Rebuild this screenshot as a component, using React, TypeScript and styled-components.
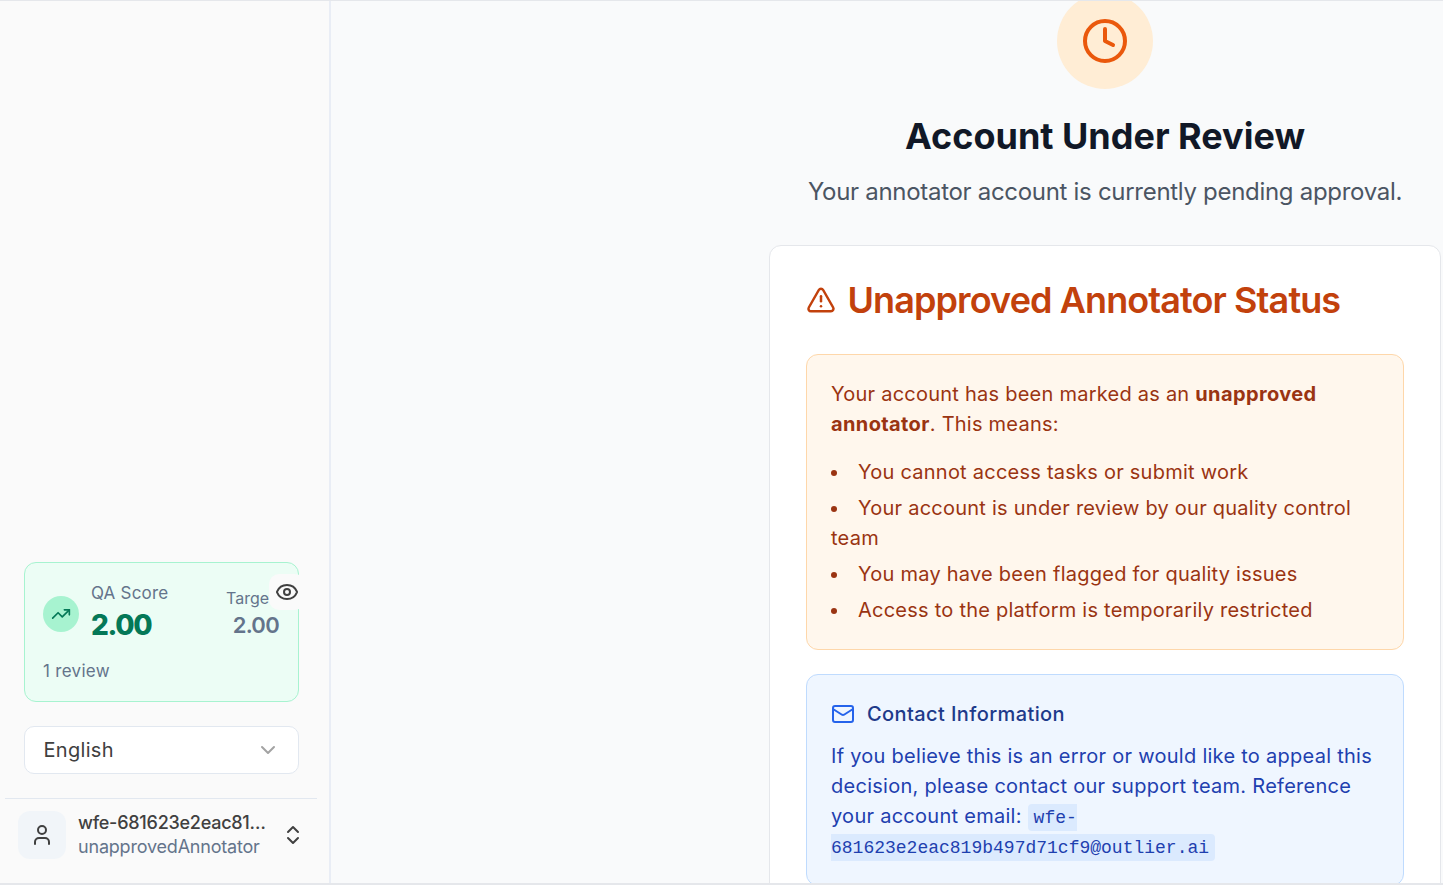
import React from 'react';
import styled, { createGlobalStyle } from 'styled-components';
import { ChevronDown, ChevronsUpDown, Clock, Eye, Mail, TrendingUp, TriangleAlert, User } from 'lucide-react';

const GlobalStyle = createGlobalStyle`
  * {
    box-sizing: border-box;
  }
  html,
  body {
    margin: 0;
    height: 885px;
    overflow: hidden;
    background: #f9fafb;
    font-family: Inter, 'Liberation Sans', sans-serif;
  }
`;

const Shell = styled.div`
  display: flex;
  height: 885px;
  border-top: 1px solid #e5e7eb;
  border-bottom: 2px solid #e5e7eb;
  overflow: hidden;
`;

const Sidebar = styled.aside`
  width: 331px;
  flex: none;
  display: flex;
  flex-direction: column;
  justify-content: flex-end;
  background: #fafafa;
  border-right: 2px solid #e9edf5;
  padding: 0 12px 0 5px;
`;

const ScoreCard = styled.section`
  position: relative;
  height: 140px;
  margin: 0 18px 24px 19px;
  padding: 18px 18px 0;
  background: #ecfdf5;
  border: 1px solid #a7f3d0;
  border-radius: 12px;
`;

const ScoreRow = styled.div`
  display: flex;
  align-items: center;
  gap: 12px;
`;

const ScoreBadge = styled.div`
  width: 36px;
  height: 36px;
  flex: none;
  margin-top: 2px;
  display: flex;
  align-items: center;
  justify-content: center;
  border-radius: 50%;
  background: #a7f3d0;
  color: #047857;
`;

const ScoreColumn = styled.div`
  flex: 1;
`;

const ScoreLabel = styled.div`
  font-size: 17px;
  line-height: 24px;
  letter-spacing: 0.2px;
  color: #64748b;
`;

const ScoreValue = styled.div`
  padding-top: 1px;
  font-size: 28px;
  line-height: 39px;
  font-weight: 800;
  letter-spacing: -1.3px;
  color: #047857;
`;

const TargetColumn = styled.div`
  width: 54px;
  margin-left: -1px;
  overflow: hidden;
  text-align: right;
`;

const TargetLabel = styled.div`
  font-size: 16px;
  line-height: 24px;
  color: #64748b;
  white-space: nowrap;
  text-align: left;
`;

const TargetValue = styled.div`
  padding-right: 1px;
  font-size: 22px;
  line-height: 30px;
  font-weight: 600;
  letter-spacing: -0.7px;
  color: #64748b;
`;

const ReviewCount = styled.div`
  margin-top: 14px;
  font-size: 17px;
  line-height: 24px;
  letter-spacing: 0.3px;
  color: #64748b;
`;

const EyeButton = styled.button`
  position: absolute;
  top: 11px;
  right: -7px;
  width: 36px;
  height: 36px;
  display: flex;
  align-items: center;
  justify-content: center;
  padding: 0;
  border: none;
  border-radius: 10px;
  background: #fafafa;
  color: #404040;
`;

const LanguageSelect = styled.div`
  height: 48px;
  margin: 0 18px 24px 19px;
  padding: 0 18px 0 18.5px;
  display: flex;
  align-items: center;
  justify-content: space-between;
  background: #fff;
  border: 1px solid #e2e8f0;
  border-radius: 10px;
  font-size: 20px;
  letter-spacing: 0.3px;
  color: #404040;
  svg {
    color: #a3a3a3;
  }
`;

const UserRow = styled.div`
  height: 85px;
  display: flex;
  align-items: flex-start;
  padding: 12px 13px 0;
  border-top: 1px solid #e2e8f0;
`;

const Avatar = styled.div`
  width: 48px;
  height: 48px;
  flex: none;
  display: flex;
  align-items: center;
  justify-content: center;
  border-radius: 12px;
  background: #f1f5f9;
  color: #404040;
`;

const UserText = styled.div`
  width: 188px;
  margin-left: 12px;
  flex: none;
`;

const UserName = styled.div`
  width: 188px;
  font-size: 18px;
  line-height: 24px;
  font-weight: 500;
  letter-spacing: -0.25px;
  color: #404040;
  white-space: nowrap;
  overflow: hidden;
  text-overflow: ellipsis;
`;

const UserRole = styled.div`
  font-size: 18px;
  line-height: 24px;
  letter-spacing: -0.2px;
  color: #64748b;
`;

const SwitchIcon = styled.div`
  margin: 12px 0 0 15px;
  display: flex;
  color: #404040;
`;

const Main = styled.main`
  flex: 1;
  display: flex;
  justify-content: flex-end;
  padding-right: 2px;
  background: #f9fafb;
`;

const Column = styled.div`
  width: 672px;
  margin-top: -8px;
  display: flex;
  flex-direction: column;
  align-items: center;
`;

const ClockCircle = styled.div`
  width: 96px;
  height: 96px;
  flex: none;
  display: flex;
  align-items: center;
  justify-content: center;
  border-radius: 50%;
  background: #ffedd5;
  color: #ea580c;
`;

const Title = styled.h1`
  margin: 23px 0 0;
  font-size: 36px;
  line-height: 48px;
  font-weight: 700;
  color: #111827;
`;

const Subtitle = styled.p`
  margin: 16px 0 0;
  font-size: 24px;
  line-height: 32px;
  letter-spacing: -0.3px;
  color: #4b5563;
  white-space: nowrap;
`;

const Card = styled.section`
  width: 100%;
  margin-top: 37px;
  padding: 30px 36px 0;
  background: #fff;
  border: 1px solid #e5e7eb;
  border-radius: 12px 12px 0 0;
  flex: 1;
`;

const CardHeading = styled.h2`
  margin: 0 0 30px;
  display: flex;
  align-items: center;
  gap: 11.5px;
  font-size: 36px;
  line-height: 48px;
  font-weight: 600;
  letter-spacing: -0.9px;
  color: #c2410c;
`;

const WarningBox = styled.div`
  height: 296px;
  padding: 24px;
  background: #fff7ed;
  border: 1px solid #fed7aa;
  border-radius: 12px;
  font-size: 20px;
  line-height: 30px;
  letter-spacing: 0.24px;
  color: #9a3412;
`;

const WarningText = styled.p`
  margin: 0 0 18px;
  strong {
    letter-spacing: 0.38px;
  }
`;

const ReasonList = styled.ul`
  margin: 0;
  padding: 0;
  list-style: disc inside;
`;

const Reason = styled.li`
  margin-bottom: 6px;
`;

const ContactBox = styled.div`
  margin-top: 24px;
  padding: 25px 24px 24px;
  background: #eff6ff;
  border: 1px solid #bfdbfe;
  border-radius: 12px;
  color: #1e40af;
`;

const ContactHeading = styled.h3`
  margin: 0 0 13px;
  display: flex;
  align-items: center;
  gap: 12px;
  font-size: 20px;
  line-height: 28px;
  font-weight: 500;
  letter-spacing: 0.4px;
  color: #1e3a8a;
  svg {
    color: #2563eb;
  }
`;

const ContactText = styled.p`
  margin: 0;
  font-size: 20px;
  line-height: 30px;
  letter-spacing: 0.27px;
`;

const EmailCode = styled.code`
  padding: 3.5px 6px;
  background: #dbeafe;
  border-radius: 4px;
  font-family: 'Liberation Mono', monospace;
  font-size: 18px;
  line-height: 1;
  letter-spacing: 0;
  vertical-align: 1px;
`;

export default function App() {
  return (
    <>
      <GlobalStyle />
      <Shell>
        <Sidebar>
          <ScoreCard>
            <ScoreRow>
              <ScoreBadge>
                <TrendingUp size={20} />
              </ScoreBadge>
              <ScoreColumn>
                <ScoreLabel>QA Score</ScoreLabel>
                <ScoreValue>2.00</ScoreValue>
              </ScoreColumn>
              <TargetColumn>
                <TargetLabel>Target</TargetLabel>
                <TargetValue>2.00</TargetValue>
              </TargetColumn>
            </ScoreRow>
            <ReviewCount>1 review</ReviewCount>
            <EyeButton>
              <Eye size={24} />
            </EyeButton>
          </ScoreCard>
          <LanguageSelect>
            English
            <ChevronDown size={24} />
          </LanguageSelect>
          <UserRow>
            <Avatar>
              <User size={24} />
            </Avatar>
            <UserText>
              <UserName>wfe-681623e2eac819b497d71cf9</UserName>
              <UserRole>unapprovedAnnotator</UserRole>
            </UserText>
            <SwitchIcon>
              <ChevronsUpDown size={24} />
            </SwitchIcon>
          </UserRow>
        </Sidebar>
        <Main>
          <Column>
            <ClockCircle>
              <Clock size={48} />
            </ClockCircle>
            <Title>Account Under Review</Title>
            <Subtitle>Your annotator account is currently pending approval.</Subtitle>
            <Card>
              <CardHeading>
                <TriangleAlert size={30} />
                Unapproved Annotator Status
              </CardHeading>
              <WarningBox>
                <WarningText>
                  Your account has been marked as an <strong>unapproved annotator</strong>. This means:
                </WarningText>
                <ReasonList>
                  <Reason>You cannot access tasks or submit work</Reason>
                  <Reason>Your account is under review by our quality control team</Reason>
                  <Reason>You may have been flagged for quality issues</Reason>
                  <Reason>Access to the platform is temporarily restricted</Reason>
                </ReasonList>
              </WarningBox>
              <ContactBox>
                <ContactHeading>
                  <Mail size={24} />
                  Contact Information
                </ContactHeading>
                <ContactText>
                  If you believe this is an error or would like to appeal this decision, please contact our support
                  team. Reference your account email: <EmailCode>wfe-681623e2eac819b497d71cf9@outlier.ai</EmailCode>
                </ContactText>
              </ContactBox>
            </Card>
          </Column>
        </Main>
      </Shell>
    </>
  );
}
